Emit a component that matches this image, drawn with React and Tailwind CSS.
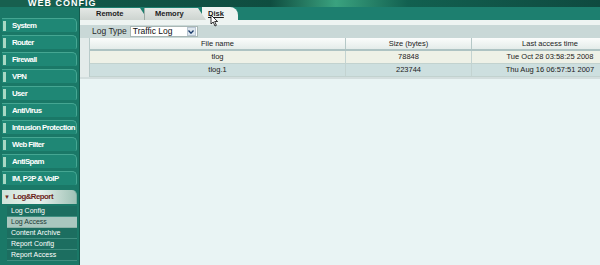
import React from 'react'

const menu = [
  'System',
  'Router',
  'Firewall',
  'VPN',
  'User',
  'AntiVirus',
  'Intrusion Protection',
  'Web Filter',
  'AntiSpam',
  'IM, P2P & VoIP',
]

const subMenu = ['Log Config', 'Log Access', 'Content Archive', 'Report Config', 'Report Access']

const rows = [
  { name: 'tlog', size: '78848', time: 'Tue Oct 28 03:58:25 2008' },
  { name: 'tlog.1', size: '223744', time: 'Thu Aug 16 06:57:51 2007' },
]

export default function App() {
  return (
    <div className="w-[600px] h-[265px] overflow-hidden flex flex-col bg-[#e9f4f4] font-['Liberation_Sans',Arial,sans-serif]">
      {/* HEADER STRIP */}
      <div className="h-[7px] flex shrink-0 bg-[linear-gradient(90deg,#145c4d_0%,#0f4d40_45%,#3aa27f_56%,#126050_68%,#0f4a40_100%)]">
        <div className="w-[80px] h-full bg-[#17604f] relative">
          <div className="absolute left-[28px] top-[-2px] text-[9px] leading-[10px] font-bold tracking-[1px] text-white whitespace-nowrap">
            WEB CONFIG
          </div>
        </div>
      </div>

      <div className="flex flex-1 min-h-0">
        {/* SIDEBAR */}
        <div className="w-[80px] shrink-0 bg-[#1a7867] border-r border-[#135a4d] flex flex-col pt-[11px] px-[2px]">
          <div className="flex flex-col gap-[3px]">
            {menu.map((item) => (
              <div
                key={item}
                className="h-[14px] flex items-center rounded-tr-[5px] rounded-br-[2px] bg-[#1f8775] border-t border-r border-[#45a692] pl-[1px]"
              >
                <div className="w-[3px] h-[10px] bg-[#a8d8c4] mr-[6px]" />
                <span className="text-[7.8px] font-bold tracking-[-0.55px] text-white whitespace-nowrap">{item}</span>
              </div>
            ))}
          </div>

          <div className="mt-[5px] h-[14px] flex items-center rounded-tr-[5px] bg-[linear-gradient(90deg,#cfe3da_0%,#e8f1ec_50%,#9fc2b6_100%)] border-r border-[#7fb2a3] pl-[2px]">
            <span className="text-[6px] text-[#6a2a20] mr-[3px]">▼</span>
            <span className="text-[7.8px] font-bold tracking-[-0.5px] text-[#6b1f1a] whitespace-nowrap">Log&amp;Report</span>
          </div>

          <div className="mt-[2px] ml-[5px] flex flex-col">
            {subMenu.map((item) => (
              <div
                key={item}
                className={
                  item === 'Log Access'
                    ? 'h-[11px] flex items-center pl-[4px] bg-[#a9c7bf] border-b border-[#8cb3a8] text-[#1d3a35]'
                    : 'h-[11px] flex items-center pl-[4px] bg-[#1c6e60] border-b border-[#3f8f80] text-white'
                }
              >
                <span className="text-[7px] whitespace-nowrap">{item}</span>
              </div>
            ))}
          </div>
        </div>

        {/* MAIN */}
        <div className="flex-1 min-w-0 flex flex-col overflow-hidden relative">
          {/* TABS */}
          <div className="h-[13px] shrink-0 bg-[#1d7f6f] flex items-end relative">
            <div className="h-[12px] w-[68px] flex items-center pl-[16px] bg-[linear-gradient(180deg,#e4e8e5,#cdd4d0)] [clip-path:polygon(0_0,60px_0,68px_100%,0_100%)]">
              <span className="text-[7.5px] font-bold text-[#1c1c1c]">Remote</span>
            </div>
            <div className="h-[12px] w-[62px] ml-[-4px] flex items-center pl-[10px] bg-[linear-gradient(180deg,#e4e8e5,#cdd4d0)] [clip-path:polygon(0_0,54px_0,62px_100%,0_100%)] border-l border-[#9eaaa5]">
              <span className="text-[7.5px] font-bold text-[#1c1c1c]">Memory</span>
            </div>
            <div className="h-[13px] w-[36px] ml-[-4px] flex items-center pl-[6px] bg-[#eef3f1] rounded-tr-[8px]">
              <span className="text-[7.5px] font-bold text-[#1c1c1c] underline">Disk</span>
            </div>
          </div>

          {/* cursor */}
          <svg className="absolute left-[130px] top-[7px]" width="9" height="13" viewBox="0 0 9 13">
            <path d="M1 1 L1 10 L3.2 8 L5 12 L6.4 11.3 L4.7 7.5 L7.6 7.5 Z" fill="#fff" stroke="#000" strokeWidth="0.8" />
          </svg>

          <div className="h-[5px] shrink-0 bg-[#eef4f2]" />

          {/* LOG TYPE BAR */}
          <div className="h-[13px] shrink-0 bg-[#c9d8d7] flex items-center pl-[12px]">
            <span className="text-[8.5px] text-[#2a2a2a] mr-[3px]">Log Type</span>
            <div className="h-[11px] w-[68px] bg-white border border-[#a9b7b5] flex items-center justify-between pl-[2px]">
              <span className="text-[8.5px] leading-none text-[#111]">Traffic Log</span>
              <div className="w-[9px] h-[9px] mr-[1px] bg-[#dde6ee] border border-[#b8c6d2] flex items-center justify-center">
                <svg width="6" height="4" viewBox="0 0 6 4">
                  <path d="M0.5 0.5 L3 3.2 L5.5 0.5" fill="none" stroke="#1a3a6a" strokeWidth="1.3" />
                </svg>
              </div>
            </div>
          </div>

          {/* TABLE */}
          <div className="flex bg-[#e3ebea]">
            <div className="w-[10px] shrink-0 border-r border-[#b9cbca]" />
            <div className="w-[538px] shrink-0 text-[7.5px] text-[#222]">
              <div className="h-[13px] flex border-b-2 border-[#aec3c3] bg-[linear-gradient(180deg,#fbfcfb,#e4ecea)]">
                <div className="w-[256px] flex items-center justify-center border-r border-[#b5c8c7]">File name</div>
                <div className="w-[126px] flex items-center justify-center border-r border-[#b5c8c7]">Size (bytes)</div>
                <div className="flex-1 flex items-center justify-center">Last access time</div>
              </div>
              {rows.map((r, i) => (
                <div
                  key={r.name}
                  className={
                    i === 0
                      ? 'h-[13px] flex bg-[#eef1e7] border-b border-[#c2d2cf]'
                      : 'h-[13px] flex bg-[#cddfdf] border-b border-[#c2d2cf]'
                  }
                >
                  <div className="w-[256px] flex items-center justify-center border-r border-[#c3d3d1]">{r.name}</div>
                  <div className="w-[126px] flex items-center justify-center border-r border-[#c3d3d1]">{r.size}</div>
                  <div className="flex-1 flex items-center justify-center">{r.time}</div>
                </div>
              ))}
            </div>
          </div>
          <div className="h-[2px] shrink-0 bg-[#d3dede]" />
        </div>
      </div>
    </div>
  )
}
